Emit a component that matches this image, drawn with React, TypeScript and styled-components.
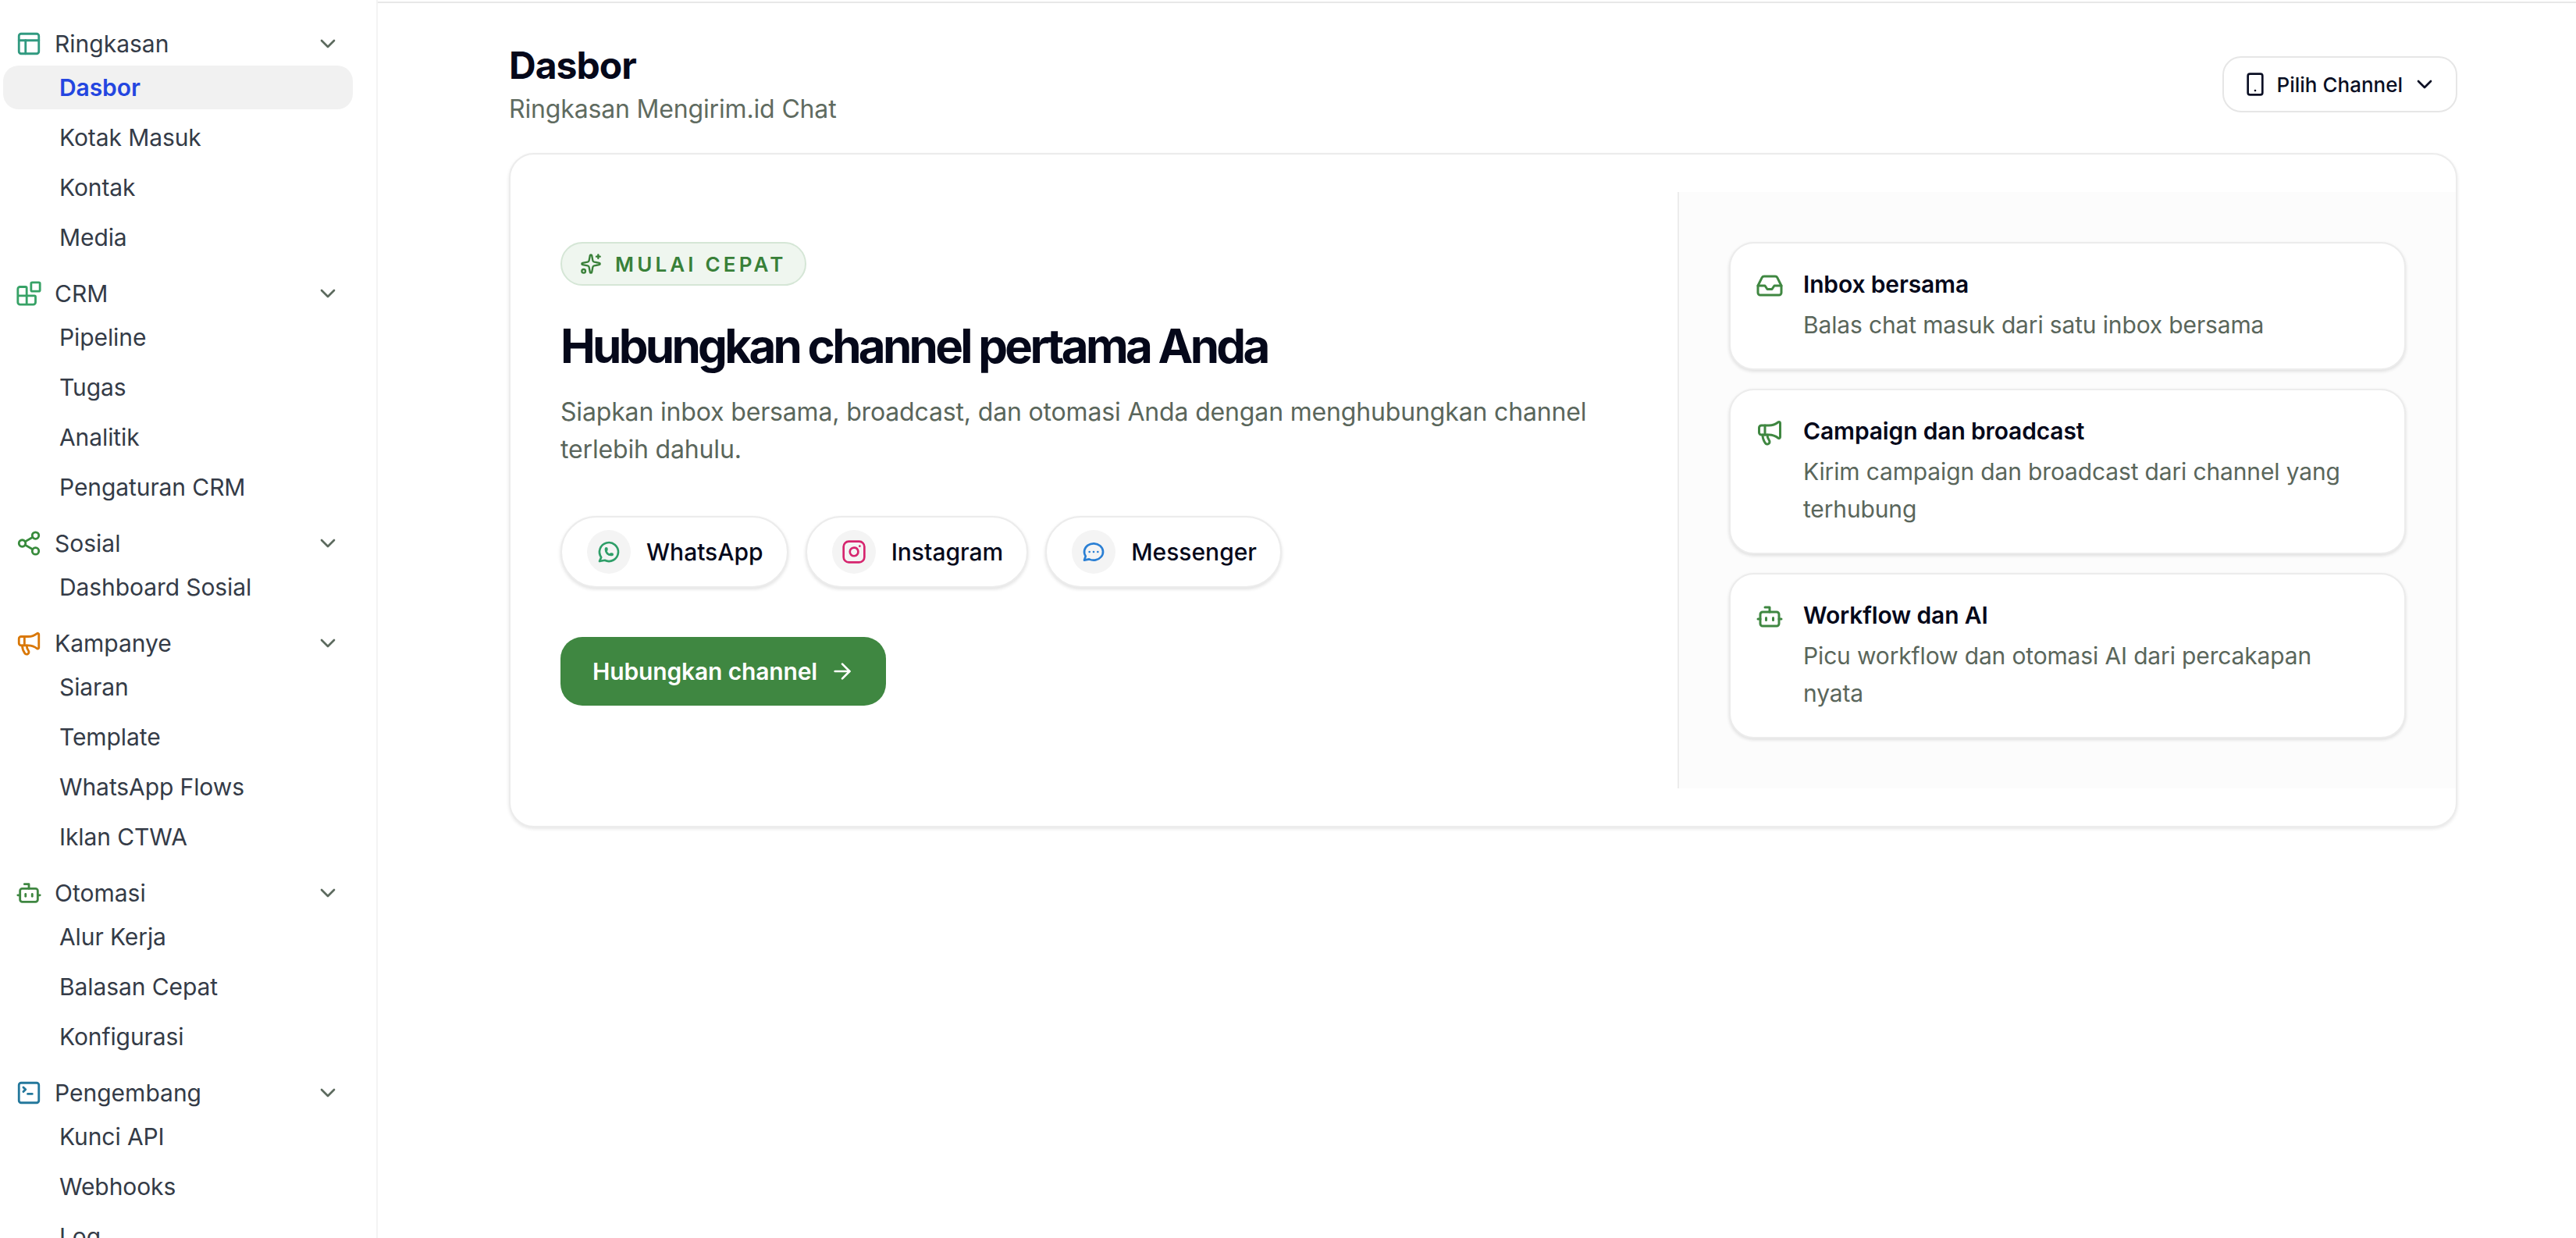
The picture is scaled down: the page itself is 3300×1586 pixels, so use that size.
import React from 'react';
import styled, { createGlobalStyle } from 'styled-components';
import {
  PanelsTopLeft,
  Blocks,
  Share2,
  Megaphone,
  Bot,
  SquareTerminal,
  ChevronDown,
  Smartphone,
  Sparkles,
  Instagram,
  ArrowRight,
  Inbox,
} from 'lucide-react';
import { TbBrandWhatsapp } from 'react-icons/tb';

const GlobalStyle = createGlobalStyle`
  html, body {
    margin: 0;
    padding: 0;
    height: 100%;
    background: #ffffff;
    overflow: hidden;
  }
  body {
    font-family: Inter, "Liberation Sans", sans-serif;
    color: #0a0a14;
  }
`;

const Shell = styled.div`
  display: flex;
  width: 3300px;
  height: 1586px;
  overflow: hidden;
`;

const Sidebar = styled.aside`
  flex: none;
  width: 484px;
  height: 1586px;
  box-sizing: border-box;
  border-right: 2px solid #f3f3f3;
  overflow: hidden;
  padding-top: 28px;
`;

const Group = styled.div`
  display: flex;
  flex-direction: column;
  margin-bottom: 16px;
`;

const GroupHeader = styled.div`
  display: flex;
  align-items: center;
  height: 56px;
  padding-left: 20px;
  padding-right: 46px;
  gap: 16px;
  font-size: 30px;
  color: #343b47;
`;

const GroupLabel = styled.span`
  flex: 1;
`;

const ItemList = styled.div`
  display: flex;
  flex-direction: column;
  gap: 8px;
`;

const Item = styled.div<{ $active?: boolean }>`
  display: flex;
  align-items: center;
  height: 56px;
  margin-left: 4px;
  width: 448px;
  padding-left: 72px;
  box-sizing: border-box;
  border-radius: 20px;
  font-size: 30px;
  letter-spacing: -0.003em;
  font-weight: ${(p) => (p.$active ? 600 : 400)};
  color: ${(p) => (p.$active ? '#2446e0' : '#343b47')};
  background: ${(p) => (p.$active ? '#f1f1f1' : 'transparent')};
`;

const Main = styled.main`
  flex: 1;
  min-width: 0;
  margin-top: 2px;
  border-top: 2px solid #e8e8e8;
  padding: 48px 152px 0 168px;
  box-sizing: border-box;
`;

const PageHead = styled.div`
  display: flex;
  justify-content: space-between;
  align-items: center;
  margin-bottom: 32px;
`;

const PageTitle = styled.h1`
  margin: 0;
  font-size: 48px;
  line-height: 64px;
  font-weight: 700;
  letter-spacing: -0.02em;
  color: #05081a;
`;

const PageSub = styled.p`
  margin: 0;
  font-size: 32px;
  line-height: 48px;
  letter-spacing: -0.005em;
  color: #5f6b60;
`;

const ChannelSelect = styled.button`
  display: flex;
  align-items: center;
  gap: 12px;
  height: 72px;
  padding: 0 24px;
  box-sizing: border-box;
  background: #fff;
  border: 2px solid #e6e6e6;
  border-radius: 24px;
  font-family: inherit;
  font-size: 26px;
  font-weight: 500;
  color: #0a0f24;
`;

const Card = styled.section`
  display: grid;
  grid-template-columns: 1495px 1fr;
  padding: 48px 0;
  background: #fff;
  border: 2px solid #ececec;
  border-radius: 32px;
  box-shadow: 0 2px 4px rgba(0, 0, 0, 0.1);
`;

const Intro = styled.div`
  padding: 64px 64px 0 64px;
`;

const Badge = styled.div`
  display: inline-flex;
  align-items: center;
  gap: 17px;
  height: 56px;
  padding: 0 23px;
  box-sizing: border-box;
  background: #eff6ef;
  border: 2px solid #d5e6d6;
  border-radius: 28px;
  font-size: 26px;
  font-weight: 600;
  letter-spacing: 0.16em;
  color: #388038;
`;

const Heading = styled.h2`
  margin: 41px 0 0;
  font-size: 60px;
  line-height: 72px;
  font-weight: 700;
  letter-spacing: -0.062em;
  color: #05081a;
`;

const Lead = styled.p`
  margin: 25px 0 0;
  font-size: 32px;
  line-height: 48px;
  letter-spacing: -0.005em;
  color: #5a665b;
`;

const ChipRow = styled.div`
  display: flex;
  gap: 22px;
  margin-top: 61px;
`;

const Chip = styled.div`
  display: flex;
  align-items: center;
  gap: 20px;
  height: 92px;
  padding: 0 30px 0 32px;
  box-sizing: border-box;
  background: #fff;
  border: 2px solid #ececec;
  border-radius: 46px;
  box-shadow: 0 2px 4px rgba(0, 0, 0, 0.12);
  font-size: 30px;
  font-weight: 500;
  color: #05081a;
`;

const ChipIcon = styled.span<{ $color: string }>`
  display: flex;
  align-items: center;
  justify-content: center;
  width: 56px;
  height: 56px;
  border-radius: 50%;
  background: #f4f4f4;
  color: ${(p) => p.$color};
`;

const ConnectButton = styled.button`
  display: inline-flex;
  align-items: center;
  gap: 16px;
  height: 88px;
  margin-top: 63px;
  padding: 0 40px 0 41px;
  background: #3f8741;
  border: none;
  border-radius: 28px;
  font-family: inherit;
  font-size: 30px;
  font-weight: 600;
  letter-spacing: -0.005em;
  color: #fff;
`;

const Features = styled.div`
  display: flex;
  flex-direction: column;
  gap: 24px;
  padding: 64px;
  background: #fcfcfc;
  border-left: 2px solid #ececec;
`;

const Feature = styled.div`
  display: grid;
  grid-template-columns: 36px 1fr;
  column-gap: 25px;
  padding: 32px;
  background: #fff;
  border: 2px solid #ececec;
  border-radius: 32px;
  box-shadow: 0 2px 4px rgba(0, 0, 0, 0.12);
  color: #3f8741;

  svg {
    margin-top: 4px;
  }
`;

const FeatureTitle = styled.div`
  font-size: 30px;
  line-height: 40px;
  font-weight: 600;
  letter-spacing: -0.005em;
  color: #05081a;
`;

const FeatureText = styled.div`
  margin-top: 8px;
  padding-right: 16px;
  font-size: 30px;
  line-height: 48px;
  letter-spacing: -0.005em;
  color: #5a665b;
`;

const nav = [
  { label: 'Ringkasan', icon: PanelsTopLeft, color: '#319a80', items: ['Dasbor', 'Kotak Masuk', 'Kontak', 'Media'] },
  { label: 'CRM', icon: Blocks, color: '#37a266', items: ['Pipeline', 'Tugas', 'Analitik', 'Pengaturan CRM'] },
  { label: 'Sosial', icon: Share2, color: '#388b3c', items: ['Dashboard Sosial'] },
  { label: 'Kampanye', icon: Megaphone, color: '#d97706', items: ['Siaran', 'Template', 'WhatsApp Flows', 'Iklan CTWA'] },
  { label: 'Otomasi', icon: Bot, color: '#3f8741', items: ['Alur Kerja', 'Balasan Cepat', 'Konfigurasi'] },
  { label: 'Pengembang', icon: SquareTerminal, color: '#24789c', items: ['Kunci API', 'Webhooks', 'Log'] },
];

const features = [
  { title: 'Inbox bersama', text: 'Balas chat masuk dari satu inbox bersama', icon: Inbox },
  { title: 'Campaign dan broadcast', text: 'Kirim campaign dan broadcast dari channel yang terhubung', icon: Megaphone },
  { title: 'Workflow dan AI', text: 'Picu workflow dan otomasi AI dari percakapan nyata', icon: Bot },
];

const MessengerIcon = () => (
  <svg width="32" height="32" viewBox="0 0 24 24" fill="none" stroke="currentColor" strokeWidth="2" strokeLinecap="round" strokeLinejoin="round">
    <path d="M3 20l1.3 -3.9c-2.324 -3.437 -1.426 -7.872 2.1 -10.374c3.526 -2.501 8.59 -2.296 11.845 .48c3.255 2.777 3.695 7.266 1.029 10.501c-2.666 3.235 -7.615 4.215 -11.574 2.293l-4.7 1" />
    <path d="M12 12v.01M8 12v.01M16 12v.01" />
  </svg>
);

export default function App() {
  return (
    <Shell>
      <GlobalStyle />
      <Sidebar>
        {nav.map((group) => (
          <Group key={group.label}>
            <GroupHeader>
              <group.icon size={34} color={group.color} strokeWidth={2} />
              <GroupLabel>{group.label}</GroupLabel>
              <ChevronDown size={32} color="#5c6a5e" strokeWidth={2} />
            </GroupHeader>
            <ItemList>
              {group.items.map((item) => (
                <Item key={item} $active={item === 'Dasbor'}>{item}</Item>
              ))}
            </ItemList>
          </Group>
        ))}
      </Sidebar>
      <Main>
        <PageHead>
          <div>
            <PageTitle>Dasbor</PageTitle>
            <PageSub>Ringkasan Mengirim.id Chat</PageSub>
          </div>
          <ChannelSelect>
            <Smartphone size={32} strokeWidth={2} />
            Pilih Channel
            <ChevronDown size={32} strokeWidth={2} />
          </ChannelSelect>
        </PageHead>
        <Card>
          <Intro>
            <Badge>
              <Sparkles size={28} strokeWidth={2} />
              MULAI CEPAT
            </Badge>
            <Heading>Hubungkan channel pertama Anda</Heading>
            <Lead>Siapkan inbox bersama, broadcast, dan otomasi Anda dengan menghubungkan channel terlebih dahulu.</Lead>
            <ChipRow>
              <Chip>
                <ChipIcon $color="#2e9e68"><TbBrandWhatsapp size={32} /></ChipIcon>
                WhatsApp
              </Chip>
              <Chip>
                <ChipIcon $color="#d6246e"><Instagram size={32} strokeWidth={2} /></ChipIcon>
                Instagram
              </Chip>
              <Chip>
                <ChipIcon $color="#2a7fd4"><MessengerIcon /></ChipIcon>
                Messenger
              </Chip>
            </ChipRow>
            <ConnectButton>
              Hubungkan channel
              <ArrowRight size={32} strokeWidth={2} />
            </ConnectButton>
          </Intro>
          <Features>
            {features.map((f) => (
              <Feature key={f.title}>
                <f.icon size={36} strokeWidth={2} />
                <div>
                  <FeatureTitle>{f.title}</FeatureTitle>
                  <FeatureText>{f.text}</FeatureText>
                </div>
              </Feature>
            ))}
          </Features>
        </Card>
      </Main>
    </Shell>
  );
}
